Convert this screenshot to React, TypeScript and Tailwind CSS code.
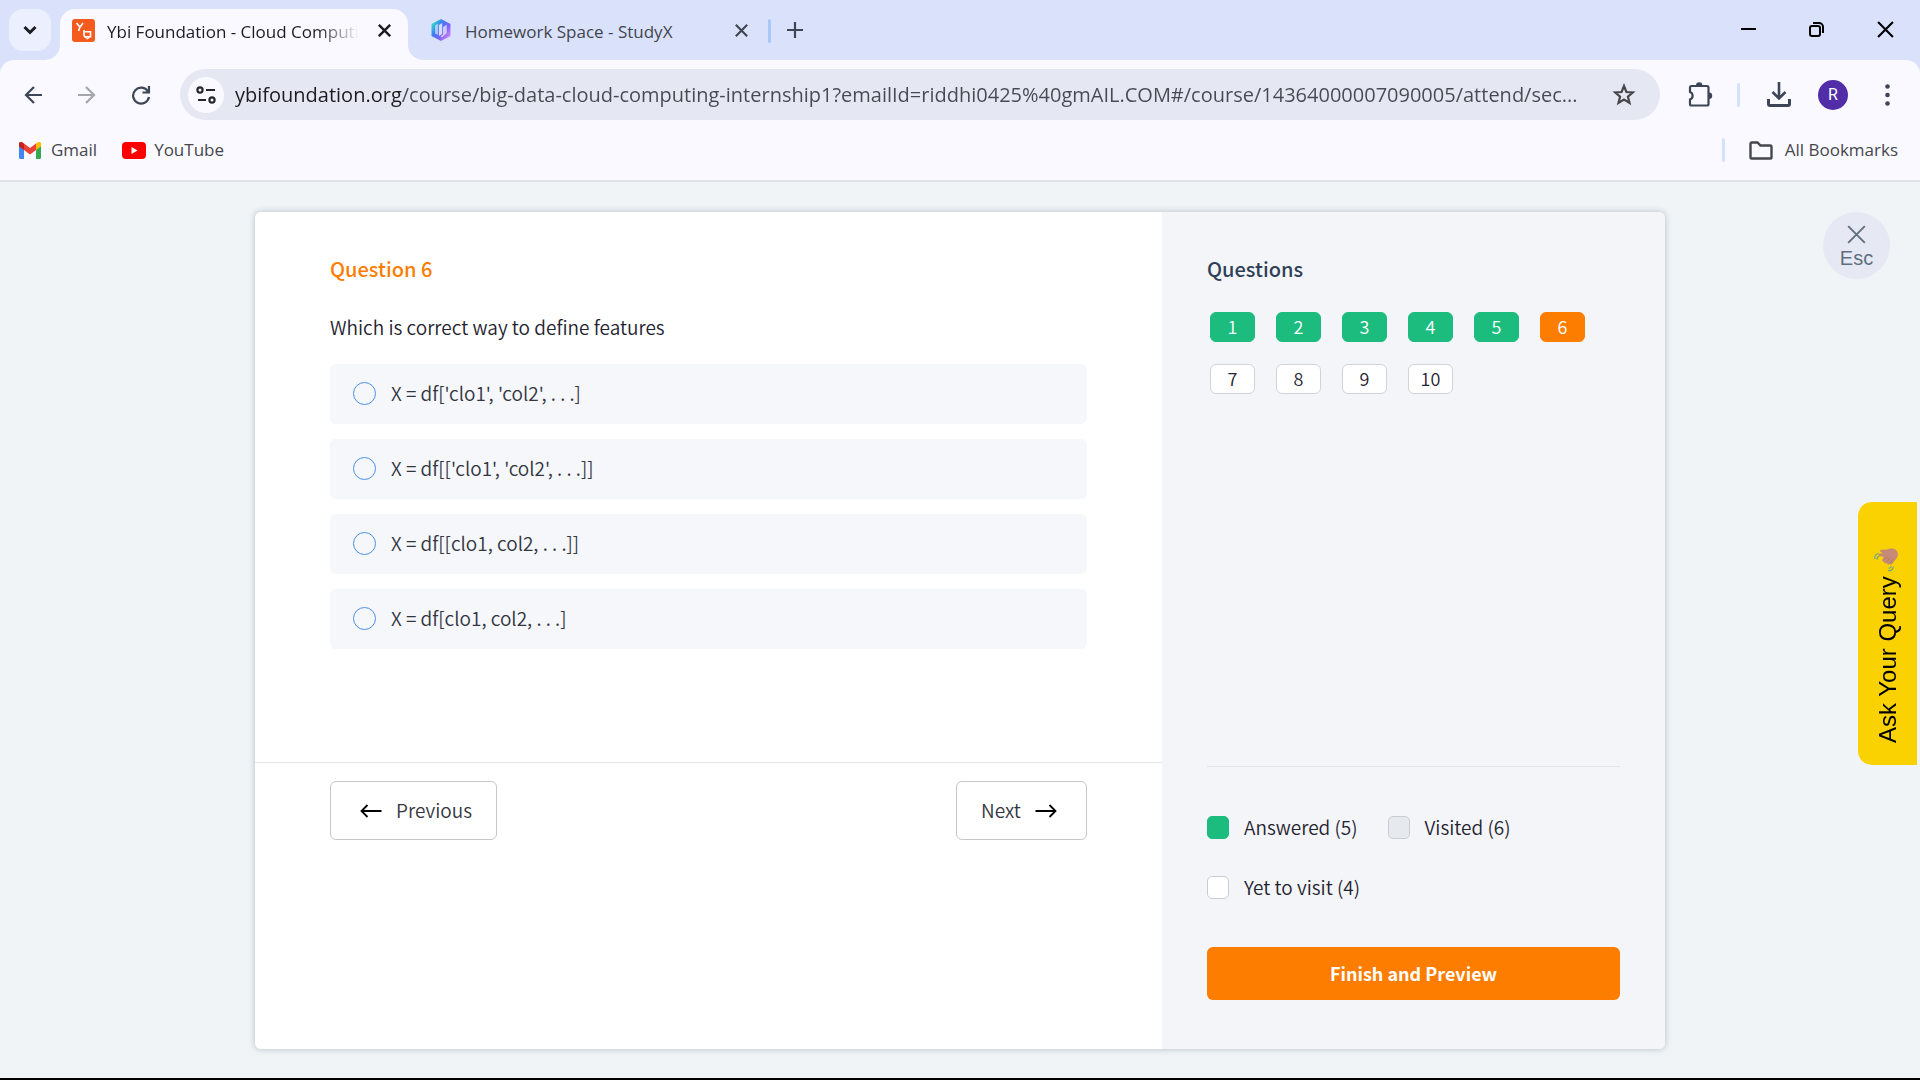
import { useState } from 'react'
import type { ReactNode } from 'react'

const URL_TEXT =
  'ybifoundation.org/course/big-data-cloud-computing-internship1?emailId=riddhi0425%40gmAIL.COM#/course/14364000007090005/attend/sec...'

const OPTIONS = [
  "X = df['clo1', 'col2', . . .]",
  "X = df[['clo1', 'col2', . . .]]",
  'X = df[[clo1, col2, . . .]]',
  'X = df[clo1, col2, . . .]',
]

const QUESTIONS = [1, 2, 3, 4, 5, 6, 7, 8, 9, 10]
const ANSWERED = [1, 2, 3, 4, 5]
const CURRENT = 6

interface IconButtonProps {
  label: string
  className?: string
  children: ReactNode
}

function IconButton({ label, className = '', children }: IconButtonProps) {
  return (
    <button type="button" aria-label={label} className={`flex shrink-0 items-center justify-center ${className}`}>
      {children}
    </button>
  )
}

function CloseIcon({ size, width }: { size: number; width: number }) {
  return (
    <svg width={size} height={size} viewBox="0 0 16 16" fill="none" stroke="currentColor" strokeWidth={width}>
      <path d="M1 1l14 14M15 1L1 15" />
    </svg>
  )
}

function YbiLogo() {
  return (
    <svg width="23" height="23" viewBox="0 0 23 23" fill="none" className="shrink-0">
      <rect width="23" height="23" rx="3" fill="#f55a1f" />
      <path d="M4.500 4l3.500 4.200L11 4M8 8l-1.500 4M12 11v5a2.500 2.500 0 0 0 1.500 2.200M12 12.800h6.500v5h-5" stroke="#fff" strokeWidth="1.600" />
      <path d="M13 18l2.500 1.700L17.500 18" stroke="#fff" strokeWidth="1.300" />
    </svg>
  )
}

function StudyXLogo() {
  return (
    <svg width="20" height="22" viewBox="0 0 20 22" fill="none" className="shrink-0">
      <defs>
        <linearGradient id="studyx" x1="0" y1="4" x2="20" y2="18" gradientUnits="userSpaceOnUse">
          <stop offset="0" stopColor="#2ff0c0" />
          <stop offset="0.350" stopColor="#3f7bf5" />
          <stop offset="0.650" stopColor="#7a62f7" />
          <stop offset="1" stopColor="#dc8cff" />
        </linearGradient>
      </defs>
      <path d="M10 0l9.500 5v12L10 22 .5 17V5z" fill="url(#studyx)" />
      <path d="M4 6.500l3.200-1.800V16L4 14.500z" fill="#fff" fillOpacity=".55" />
      <path d="M8 6l3.200-2v11L8 17z" fill="#fff" fillOpacity=".75" />
      <path d="M12 8l3.800-2.200V14L11 18.500 9.500 17.500 12 15.500z" fill="#fff" fillOpacity=".65" />
    </svg>
  )
}

// Concave corner that joins the active tab to the toolbar
function TabFlare({ className }: { className: string }) {
  return (
    <svg width="15" height="15" viewBox="0 0 15 15" className={`absolute bottom-0 ${className}`}>
      <path d="M15 0v15H0A15 15 0 0 0 15 0z" fill="#faf9ff" />
    </svg>
  )
}

function TabStrip() {
  return (
    <div className="flex h-[60px] items-stretch bg-[#dae1fa] pt-[9px] pl-[9px]">
      <IconButton label="Search tabs" className="size-[42px] rounded-[14px] bg-[#ebeffe] text-[#1c1c20]">
        <svg width="14" height="10" viewBox="0 0 14 10" fill="none" stroke="currentColor" strokeWidth="3">
          <path d="M1.500 2L7 7.500 12.500 2" />
        </svg>
      </IconButton>

      <div className="relative ml-[9px] flex w-[348px] items-center rounded-t-[15px] bg-[#faf9ff] pr-[14px] pb-[9px] pl-3 text-[#1c1c20]">
        <TabFlare className="-left-[15px]" />
        <TabFlare className="-right-[15px] -scale-x-100" />
        <YbiLogo />
        <span className="ml-3 w-[254px] overflow-hidden pt-[3px] text-[17px] leading-6 whitespace-nowrap [mask-image:linear-gradient(to_right,#000_210px,transparent_252px)]">
          Ybi Foundation - Cloud Computing
        </span>
        <IconButton label="Close tab" className="ml-auto size-5">
          <CloseIcon size={13} width={3} />
        </IconButton>
      </div>

      <div className="flex w-[360px] items-center pr-[17px] pb-[9px] pl-[23px] text-[#41454f]">
        <StudyXLogo />
        <span className="ml-[14px] pt-[3px] text-[17px] leading-6 whitespace-nowrap">Homework Space - StudyX</span>
        <IconButton label="Close tab" className="ml-auto size-5">
          <CloseIcon size={13} width={2.6} />
        </IconButton>
      </div>
      <div className="mt-[10px] h-6 w-[3px] rounded-full bg-[#a8c7fa]" />
      <IconButton label="New tab" className="ml-[3px] size-[42px] text-[#3d4657]">
        <svg width="16" height="16" viewBox="0 0 16 16" stroke="currentColor" strokeWidth="2.200">
          <path d="M8 0v16M0 8h16" />
        </svg>
      </IconButton>

      <div className="ml-auto flex h-10 items-center text-black">
        <IconButton label="Minimize" className="w-[68px]">
          <svg width="15" height="2" viewBox="0 0 15 2">
            <path d="M0 0h15v2H0z" />
          </svg>
        </IconButton>
        <IconButton label="Restore" className="w-[68px]">
          <svg width="15" height="15" viewBox="0 0 15 15" fill="none" stroke="currentColor" strokeWidth="2">
            <rect x="1" y="4" width="10" height="10" rx="2" />
            <path d="M4 1h6a4 4 0 0 1 4 4v6" />
          </svg>
        </IconButton>
        <IconButton label="Close" className="w-[70px]">
          <CloseIcon size={17} width={2} />
        </IconButton>
      </div>
    </div>
  )
}

function Toolbar() {
  return (
    <div className="bg-[#dae1fa]">
      <div className="flex items-center rounded-t-[14px] bg-[#faf9ff] pt-[9px] pr-[15px] pl-[15px] text-[#3d4657]">
        <IconButton label="Back" className="size-9">
          <svg width="18" height="18" viewBox="0 0 18 18" fill="none" stroke="currentColor" strokeWidth="2.200">
            <path d="M18 9H2M10 1L2 9l8 8" />
          </svg>
        </IconButton>
        <IconButton label="Forward" className="ml-[18px] size-9 text-[#a4a5ab]">
          <svg width="18" height="18" viewBox="0 0 18 18" fill="none" stroke="currentColor" strokeWidth="2.200">
            <path d="M0 9h16M8 1l8 8-8 8" />
          </svg>
        </IconButton>
        <IconButton label="Reload" className="ml-[18px] size-9">
          <svg width="20" height="20" viewBox="0 0 20 20" fill="none" stroke="currentColor" strokeWidth="2.200">
            <path d="M17 6.500A8 8 0 1 0 18 12M18 1v6.500h-6.500" />
          </svg>
        </IconButton>

        <div className="ml-[21px] flex h-[51px] min-w-0 flex-1 items-center rounded-full bg-[#e5e8f3] pr-6 pl-2">
          <IconButton label="View site information" className="size-9 rounded-full bg-[#faf9ff] text-[#26272c]">
            <svg width="20" height="18" viewBox="0 0 20 18" fill="none" stroke="currentColor" strokeWidth="2.200">
              <circle cx="4" cy="4" r="2.600" />
              <path d="M10 4h9M2 14h8" />
              <circle cx="16" cy="14" r="2.600" />
            </svg>
          </IconButton>
          <input
            type="text"
            aria-label="Address"
            defaultValue={URL_TEXT}
            spellCheck={false}
            className="ml-[11px] min-w-0 flex-1 bg-[linear-gradient(to_right,#1c1c20_167px,#474a52_167px)] bg-clip-text text-xl leading-7 text-transparent caret-black outline-none"
          />
          <IconButton label="Bookmark this tab" className="ml-3 text-[#45474d]">
            <svg width="24" height="23" viewBox="0 0 24 23" fill="none" stroke="currentColor" strokeWidth="2.200">
              <path d="M12 3l2.400 6 6.400.5-4.900 4.100 1.600 6.300L12 16.500l-5.500 3.400 1.600-6.300L3.200 9.500l6.400-.5z" />
            </svg>
          </IconButton>
        </div>

        <IconButton label="Extensions" className="ml-7">
          <svg width="25" height="25" viewBox="0 0 25 25" fill="none">
            <path
              d="M3.500 4h15.500a1.500 1.500 0 0 1 1.500 1.500V22a1.500 1.500 0 0 1-1.500 1.500H3.500A1.500 1.500 0 0 1 2 22v-4.500a4 4 0 0 0 0-7.500V5.500A1.500 1.500 0 0 1 3.500 4z"
              stroke="currentColor"
              strokeWidth="2.200"
            />
            <path d="M8 3.500a3.200 3.200 0 0 1 6.400 0zM21 10.500a3.200 3.200 0 0 1 0 6.400z" fill="currentColor" />
          </svg>
        </IconButton>
        <div className="ml-6 h-6 w-[3px] rounded-full bg-[#d3e3fd]" />
        <IconButton label="Downloads" className="ml-[27px]">
          <svg width="24" height="25" viewBox="0 0 24 25" fill="none" stroke="currentColor">
            <path d="M12 0v16M5.500 10l6.500 6.500 6.500-6.500" strokeWidth="2.600" />
            <path d="M1.500 17v5a1.500 1.500 0 0 0 1.500 1.500h18a1.500 1.500 0 0 0 1.500-1.500v-5" strokeWidth="3" />
          </svg>
        </IconButton>
        <IconButton
          label="Profile"
          className="ml-[27px] size-[30px] rounded-full bg-[#512da8] font-['Roboto',sans-serif] text-base text-white"
        >
          R
        </IconButton>
        <IconButton label="Menu" className="ml-[21px] size-9">
          <svg width="5" height="22" viewBox="0 0 5 22" fill="currentColor">
            <circle cx="2.500" cy="2.500" r="2.300" />
            <circle cx="2.500" cy="11" r="2.300" />
            <circle cx="2.500" cy="19.500" r="2.300" />
          </svg>
        </IconButton>
      </div>
    </div>
  )
}

function BookmarksBar() {
  return (
    <div className="flex h-[62px] items-center border-b-2 border-[#dfe2ea] bg-[#faf9ff] pr-[22px] pl-[19px] text-[17px] leading-6 text-[#45474d]">
      <a href="#gmail" className="flex items-center gap-[10px]">
        <svg width="22" height="17" viewBox="0 0 22 17">
          <path d="M0 3v12.500A1.500 1.500 0 0 0 1.500 17H5V6z" fill="#4285f4" />
          <path d="M22 3v12.500a1.500 1.500 0 0 1-1.500 1.500H17V6z" fill="#34a853" />
          <path d="M5 1.500L11 6l6-4.500V8l-6 4.500L5 8z" fill="#ea4335" />
          <path d="M0 3A2.200 2.200 0 0 1 3.500 .5L5 1.500V8L0 4.500z" fill="#c5221f" />
          <path d="M22 3A2.200 2.200 0 0 0 18.500 .5L17 1.500V8l5-3.500z" fill="#fbbc04" />
        </svg>
        Gmail
      </a>
      <a href="#youtube" className="ml-[25px] flex items-center gap-2">
        <svg width="24" height="17" viewBox="0 0 24 17">
          <rect width="24" height="17" rx="4" fill="#f00" />
          <path d="M9.500 5l6 3.500-6 3.500z" fill="#fff" />
        </svg>
        YouTube
      </a>
      <div className="ml-auto h-6 w-[3px] rounded-full bg-[#d3e3fd]" />
      <button type="button" className="ml-6 flex items-center gap-3">
        <svg width="24" height="19" viewBox="0 0 24 19" fill="none" stroke="#45474d" strokeWidth="2.400">
          <path d="M2.800 1.500h5.700l3 3h9.700a1.300 1.300 0 0 1 1.300 1.300v10.400a1.300 1.300 0 0 1-1.300 1.300H2.800a1.300 1.300 0 0 1-1.300-1.300V2.800a1.300 1.300 0 0 1 1.300-1.300z" />
        </svg>
        All Bookmarks
      </button>
    </div>
  )
}

function QuestionPane() {
  const [selected, setSelected] = useState<string | null>(null)

  return (
    <section className="flex min-w-0 flex-1 flex-col bg-white">
      <div className="flex-1 px-[75px] pt-[42px]">
        <h1 className="text-xl leading-[30px] font-medium text-[#fd7d01]">Question {CURRENT}</h1>
        <fieldset className="mt-7">
          <legend className="text-[19px] leading-[30px] text-[#1f2430]">Which is correct way to define features</legend>
          <div className="mt-[22px] flex flex-col gap-[15px]">
            {OPTIONS.map((option) => (
              <label
                key={option}
                className="flex h-[60px] items-center gap-[15px] rounded-md bg-[#f5f7fb] px-[23px] pb-px text-[19px] text-[#33363f]"
              >
                <input
                  type="radio"
                  name="answer"
                  checked={selected === option}
                  onChange={() => setSelected(option)}
                  className="size-[23px] appearance-none rounded-full border border-[#4a90e2] checked:border-[6px]"
                />
                {option}
              </label>
            ))}
          </div>
        </fieldset>
      </div>

      <div className="flex h-[287px] items-start justify-between border-t border-[#e6e7e9] px-[75px] pt-[18px] text-[19px] text-[#33363f]">
        <button type="button" className="flex h-[59px] w-[167px] items-center gap-[14px] rounded-md border border-[#c6c7c9] pl-[29px]">
          <svg width="22" height="14" viewBox="0 0 22 14" fill="none" stroke="#000" strokeWidth="1.800">
            <path d="M21.500 7H1M7.500 1L1.500 7l6 6" />
          </svg>
          Previous
        </button>
        <button type="button" className="flex h-[59px] w-[131px] items-center gap-[14px] rounded-md border border-[#c6c7c9] pl-6">
          Next
          <svg width="22" height="14" viewBox="0 0 22 14" fill="none" stroke="#000" strokeWidth="1.800">
            <path d="M.5 7H21M14.500 1l6 6-6 6" />
          </svg>
        </button>
      </div>
    </section>
  )
}

function Legend({ swatch, children }: { swatch: string; children: ReactNode }) {
  return (
    <li className="flex items-center gap-[15px]">
      <span className={`h-[23px] w-[22px] rounded-[5px] border ${swatch}`} />
      {children}
    </li>
  )
}

function QuestionsPanel() {
  return (
    <aside className="flex w-[503px] shrink-0 flex-col bg-[#f4f5f9] px-[45px] pt-[42px] pb-[49px]">
      <h2 className="text-xl leading-[30px] font-medium text-[#2e4057]">Questions</h2>
      <div className="mt-7 ml-[3px] flex flex-wrap gap-x-[21px] gap-y-[22px]">
        {QUESTIONS.map((n) => {
          const color =
            n === CURRENT
              ? 'border-[#fd7d01] bg-[#fd7d01] text-white'
              : ANSWERED.includes(n)
                ? 'border-[#1bbc7d] bg-[#1bbc7d] text-white'
                : 'border-[#d2d3d6] bg-white text-[#1f2430]'
          return (
            <button
              key={n}
              type="button"
              className={`flex h-[30px] w-[45px] items-center justify-center rounded-md border pb-0.5 text-lg ${color}`}
            >
              {n}
            </button>
          )
        })}
      </div>

      <div className="mt-auto border-t border-[#e2e4e9] pt-[45px]">
        <ul className="flex flex-wrap gap-x-[30px] gap-y-[30px] text-[19px] leading-[30px] text-[#1f2430]">
          <Legend swatch="border-[#1bbc7d] bg-[#1bbc7d]">Answered (5)</Legend>
          <Legend swatch="border-[#c9ccd2] bg-[#e6e9ed]">Visited (6)</Legend>
          <Legend swatch="border-[#c9ccd2] bg-white">Yet to visit (4)</Legend>
        </ul>
        <button type="button" className="mt-[45px] h-[53px] w-full rounded-md bg-[#fd7d01] pb-0.5 text-lg font-bold text-white">
          Finish and Preview
        </button>
      </div>
    </aside>
  )
}

function WaveHand() {
  return (
    <svg width="26" height="24" viewBox="0 0 26 24" fill="none" className="shrink-0">
      <path
        d="M13 1.500c3-1.500 7-1.500 9 .5 2.500 2.500 2.500 6 .5 8.500l-4.500 5.500c-1 1-2.200 1-2.400-.2-1.200 1.200-3.200.6-2.800-.8-1.400 1-3.200 0-2.600-1.500-1.400.6-2.700-.8-1.800-2.200l1.500-2.300-4.400-1C4.300 7.700 4 5.800 5.800 5.500l3.200-.2-2.500-1.500C5.500 3 6 1.600 7.400 1.800z"
        fill="#c68a76"
      />
      <path d="M10.500 11.500l3-3M13.200 13.500l3-3.500M16 15.500l2.600-4" stroke="#a96f60" strokeWidth=".8" />
      <path d="M4.500 5.500C2 6 .5 8 .8 11M5.500 8C3.800 8.300 3 9.500 3 11.500M14 22.500c3 .8 5-.8 5.300-4M14.500 20c1.500.3 2.600-.4 2.900-2" stroke="#6fa58f" strokeWidth="1.200" />
    </svg>
  )
}

export default function App() {
  return (
    <div className="flex min-h-screen flex-col border-b-2 border-black bg-[#f0f4f7] font-['Open_Sans','Noto_Sans',sans-serif]">
      <header>
        <TabStrip />
        <Toolbar />
        <BookmarksBar />
      </header>

      <main className="relative flex flex-1 px-[255px] pt-[30px] pb-[29px] font-['Noto_Sans_CJK_SC',sans-serif] font-[350]">
        <div className="flex flex-1 overflow-hidden rounded-md shadow-[0_0_6px_rgba(40,60,80,0.3)]">
          <QuestionPane />
          <QuestionsPanel />
        </div>

        <button
          type="button"
          className="absolute top-[30px] right-[30px] flex size-[67px] flex-col items-center justify-center gap-[3px] rounded-full bg-[#e6e9f3] pt-[3px] font-['Liberation_Sans',sans-serif] text-xl leading-[22px] text-[#5f6f80]"
        >
          <CloseIcon size={19} width={1.6} />
          Esc
        </button>

        <button
          type="button"
          className="absolute top-[320px] right-[3px] flex h-[263px] w-[59px] rotate-180 items-center justify-start rounded-r-[14px] bg-[#fad201] pt-[22px] font-['Liberation_Sans',sans-serif] text-2xl text-black [writing-mode:vertical-rl]"
        >
          <span>Ask Your Query</span>
          <span className="mt-1 rotate-180">
            <WaveHand />
          </span>
        </button>
      </main>
    </div>
  )
}
